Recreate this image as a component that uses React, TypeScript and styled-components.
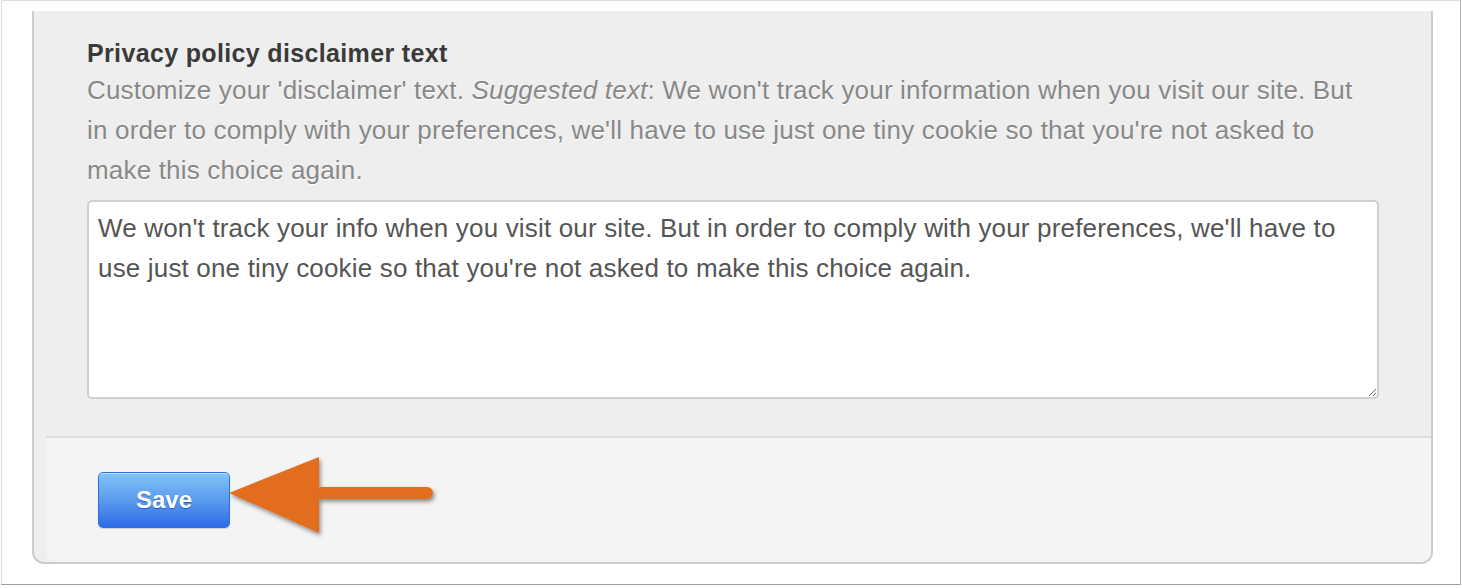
import styled, { createGlobalStyle } from 'styled-components'

const GlobalStyle = createGlobalStyle`
  html, body {
    margin: 0;
    padding: 0;
    background: #ffffff;
  }
  * {
    box-sizing: border-box;
  }
`

const disclaimer =
  "We won't track your info when you visit our site. But in order to comply with your preferences, we'll have to use just one tiny cookie so that you're not asked to make this choice again."

export default function App() {
  return (
    <>
      <GlobalStyle />
      <Frame>
        <Panel>
          <Section>
            {/* Field label */}
            <Label>Privacy policy disclaimer text</Label>
            <Help>
              Customize your 'disclaimer' text. <em>Suggested text</em>: We won't track your
              information when you visit our site. But in order to comply with your preferences,
              we'll have to use just one tiny cookie so that you're not asked to make this choice
              again.
            </Help>
            <TextArea defaultValue={disclaimer} />
          </Section>

          {/* Form actions */}
          <Footer>
            <SaveButton type='button'>Save</SaveButton>
            <Arrow width='220' height='90' viewBox='0 0 220 90'>
              <defs>
                <filter id='arrowShadow' x='-10%' y='-10%' width='130%' height='140%'>
                  <feDropShadow dx='1.5' dy='2.5' stdDeviation='2' floodColor='#000' floodOpacity='0.45' />
                </filter>
              </defs>
              <g filter='url(#arrowShadow)' fill='#e26d1f'>
                <polygon points='4,42 94,6 94,82' />
                <rect x='90' y='36' width='118' height='12' rx='6' />
              </g>
            </Arrow>
          </Footer>
        </Panel>
      </Frame>
    </>
  )
}

const Frame = styled.div`
  width: 1460px;
  height: 585px;
  margin: 0 1px;
  border: 1px solid #dcdcdc;
  border-right-color: #b5b5b5;
  border-bottom-color: #9e9e9e;
  padding: 10px 27px 20px 30px;
  display: flex;
`

const Panel = styled.div`
  flex: 1;
  display: flex;
  flex-direction: column;
  background: #eeeeee;
  border: 2px solid #cccccc;
  border-top: none;
  border-radius: 0 0 12px 12px;
  overflow: hidden;
`

const Section = styled.div`
  padding: 28px 52px 37px 53px;
  display: flex;
  flex-direction: column;
  font-family: 'Liberation Sans', Arial, sans-serif;
`

const Label = styled.div`
  font-size: 25px;
  line-height: 28px;
  font-weight: 700;
  letter-spacing: 0.35px;
  color: #3a3a3a;
`

const Help = styled.div`
  margin-top: 3px;
  font-size: 26px;
  line-height: 40px;
  letter-spacing: 0.18px;
  color: #888888;
  text-shadow: 0 1px 0 #ffffff;

  em {
    font-style: italic;
  }
`

const TextArea = styled.textarea`
  margin-top: 10px;
  height: 199px;
  width: 100%;
  padding: 6px 9px;
  border: 2px solid #cfcfcf;
  border-radius: 5px;
  background: #ffffff;
  font-family: 'Liberation Sans', Arial, sans-serif;
  font-size: 26px;
  line-height: 40px;
  letter-spacing: 0.17px;
  color: #555555;
  outline: none;
  resize: both;
`

const Footer = styled.div`
  position: relative;
  flex: 1;
  margin-left: 12px;
  padding: 34px 0 0 52px;
  background: #f4f4f4;
  border-top: 2px solid #dddddd;
  border-bottom-left-radius: 10px;
`

const SaveButton = styled.button`
  width: 132px;
  height: 56px;
  border: 1px solid #2d6fe0;
  border-radius: 5px;
  background: linear-gradient(to bottom, #82c4f8 0%, #5a9cef 50%, #2f6ae6 100%);
  box-shadow: inset 0 1px 0 rgba(255, 255, 255, 0.5), 0 1px 1px rgba(0, 0, 0, 0.15);
  color: #ffffff;
  font-family: 'Liberation Sans', Arial, sans-serif;
  font-size: 24px;
  font-weight: 700;
  text-shadow: 0 1px 1px rgba(0, 40, 120, 0.5);
  cursor: pointer;
`

const Arrow = styled.svg`
  position: absolute;
  left: 179px;
  top: 13px;
  overflow: visible;
`
